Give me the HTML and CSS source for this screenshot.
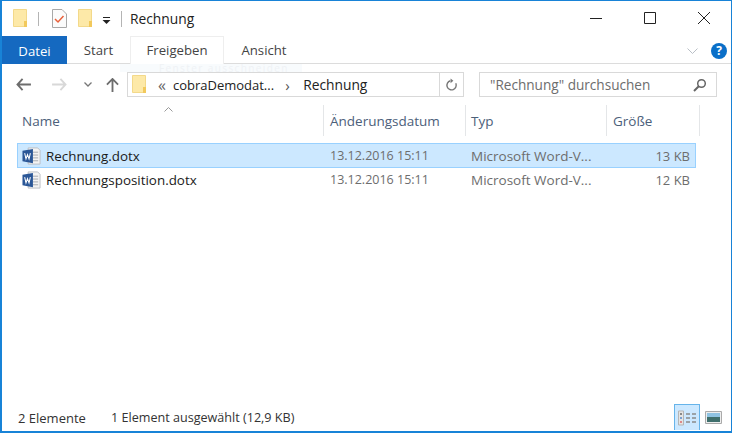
FILE: index.html
```html
<!DOCTYPE html>
<html lang="de">
<head>
<meta charset="utf-8">
<title>Rechnung</title>
<link rel="stylesheet" href="styles.css">
</head>
<body>
<svg class="defs" width="0" height="0">
  <defs>
    <symbol id="folder" viewBox="0 0 15 19">
      <path d="M.5.500h13v17H.500z" fill="#fde9a8" stroke="#f3d98a"/>
      <path d="M11 12h3v6h-3z" fill="#f2c95c"/>
    </symbol>
    <symbol id="word" viewBox="0 0 20 18">
      <path d="M6.500.500h10l2.500 2.500v14.500H6.500z" fill="#f4f4f4" stroke="#bcbfc4"/>
      <path d="M11.500 5h5.500M11.500 8h5.500M11.500 11h5.500M11.500 14h5.500" stroke="#a5a9ae"/>
      <path d="M.5 3.500 11.500 1.500v15L.5 14.500z" fill="#2b5797"/>
      <path d="M2.800 6l1.400 6 1.600-4.500L7.400 12 8.800 6" fill="none" stroke="#fff" stroke-width="1.100"/>
    </symbol>
  </defs>
</svg>
<div class="window">
  <header class="titlebar">
    <svg class="folder-icon"><use href="#folder"/></svg>
    <span class="sep sep-a"></span>
    <svg class="check-icon" viewBox="0 0 15 19" width="15" height="19">
      <path d="M.5.500h9.500l4.500 4.500v13.500H.5z" fill="#fbfbfb" stroke="#a8a8a8"/>
      <path d="M3 10l3 3 5.500-6" fill="none" stroke="#e8603a" stroke-width="1.500"/>
    </svg>
    <svg class="folder-icon folder-b"><use href="#folder"/></svg>
    <svg class="drop-icon" viewBox="0 0 9 7" width="9" height="7">
      <path d="M1 .5h7" stroke="#222"/><path d="M.5 3h8L4.500 7z" fill="#222"/>
    </svg>
    <span class="sep sep-b"></span>
    <span class="title">Rechnung</span>
    <div class="controls">
      <svg viewBox="0 0 12 12" width="12" height="12"><path d="M0 6.500h12" stroke="#222"/></svg>
      <svg viewBox="0 0 12 12" width="12" height="12"><path d="M.5.500h11v11H.500z" fill="none" stroke="#222"/></svg>
      <svg viewBox="0 0 12 12" width="12" height="12"><path d="M0 0l12 12M12 0L0 12" stroke="#222"/></svg>
    </div>
  </header>
  <nav class="tabs">
    <span class="tab tab-file">Datei</span>
    <span class="tab tab-start">Start</span>
    <span class="tab tab-active">Freigeben</span>
    <span class="tab tab-view">Ansicht</span>
    <div class="tabs-right">
      <svg viewBox="0 0 11 6" width="11" height="6"><path d="M.5.500l5 5 5-5" fill="none" stroke="#b9bfc6"/></svg>
      <span class="help">?</span>
    </div>
  </nav>
  <div class="addressbar">
    <div class="nav-buttons">
      <svg viewBox="0 0 16 14" width="15" height="13"><path d="M7 1 1.500 7 7 13M2 7h14" fill="none" stroke="#6d6d6d" stroke-width="2"/></svg>
      <svg viewBox="0 0 16 14" width="15" height="13"><path d="M9 1l5.500 6L9 13M14 7H0" fill="none" stroke="#d8d8d8" stroke-width="2"/></svg>
      <svg viewBox="0 0 8 5" width="8" height="5"><path d="M.5.500 4 4 7.500.500" fill="none" stroke="#777" stroke-width="1.300"/></svg>
      <svg viewBox="0 0 14 15" width="13" height="14"><path d="M1 7l6-6 6 6M7 2v13" fill="none" stroke="#6d6d6d" stroke-width="2"/></svg>
    </div>
    <div class="path">
      <svg class="path-folder"><use href="#folder"/></svg>
      <span class="chev">«</span>
      <span class="crumb">cobraDemodat...</span>
      <span class="crumb-arrow">›</span>
      <span class="crumb crumb-last">Rechnung</span>
      <span class="refresh">
        <svg viewBox="0 0 14 14" width="13" height="14"><path d="M3.500 3.500a5 5 0 1 0 6.500 0" fill="none" stroke="#777" stroke-width="1.500" transform="rotate(25 7 8)"/><path d="M6 0v5l3-2.500z" fill="#777"/></svg>
      </span>
    </div>
    <div class="search">
      <span>"Rechnung" durchsuchen</span>
      <svg viewBox="0 0 14 14" width="14" height="14"><circle cx="8.500" cy="5.500" r="3.800" fill="none" stroke="#666" stroke-width="1.500"/><path d="M6 8l-5 5" stroke="#666" stroke-width="2"/></svg>
    </div>
    <div class="ghost">Fenster ausschneiden</div>
  </div>
  <main class="list">
    <svg class="sort" viewBox="0 0 9 5" width="9" height="5"><path d="M.5 4.500 4.500.500l4 4" fill="none" stroke="#999"/></svg>
    <div class="row header">
      <span class="col-name">Name</span>
      <span class="col-date">Änderungsdatum</span>
      <span class="col-type">Typ</span>
      <span class="col-size">Größe</span>
    </div>
    <div class="row file selected">
      <span class="col-name"><svg class="word-icon"><use href="#word"/></svg>Rechnung.dotx</span>
      <span class="col-date">13.12.2016 15:11</span>
      <span class="col-type">Microsoft Word-V...</span>
      <span class="col-size">13 KB</span>
    </div>
    <div class="row file">
      <span class="col-name"><svg class="word-icon"><use href="#word"/></svg>Rechnungsposition.dotx</span>
      <span class="col-date">13.12.2016 15:11</span>
      <span class="col-type">Microsoft Word-V...</span>
      <span class="col-size">12 KB</span>
    </div>
  </main>
  <footer class="statusbar">
    <span class="count">2 Elemente</span>
    <span class="selection">1 Element ausgewählt (12,9 KB)</span>
    <div class="views">
      <span class="view view-active">
        <svg viewBox="0 0 20 16" width="20" height="16">
          <path d="M1.500 1h5v14h-5z" fill="#e4e4e4" stroke="#b5b5b5"/>
          <path d="M3 3h2v2H3z" fill="#888"/><path d="M3 7h2v2H3z" fill="#7aa0d0"/><path d="M3 11h2v2H3z" fill="#d88"/>
          <path d="M9 4h4M15 4h4M9 8h4M15 8h4M9 12h4M15 12h4" stroke="#8a8a8a" stroke-width="1.500"/>
        </svg>
      </span>
      <span class="view">
        <svg viewBox="0 0 17 13" width="17" height="13">
          <path d="M.5.500h16v12H.500z" fill="#eee" stroke="#aaa"/>
          <path d="M2 2h13v4H2z" fill="#8fc3e2"/><path d="M2 6h13v5H2z" fill="#3f6f6c"/>
        </svg>
      </span>
    </div>
  </footer>
</div>
</body>
</html>
```
FILE: styles.css
```css
* { box-sizing: border-box; }
html, body { margin: 0; padding: 0; }
body { width: 732px; height: 433px; overflow: hidden; background: #fff; }
.defs { position: absolute; }
.window {
  width: 732px; height: 433px;
  display: flex; flex-direction: column;
  border: 1px solid #1883d7; border-left-width: 2px; border-bottom-width: 2px;
  background: #fff;
  font: 13px/16px "Open Sans", "Noto Sans", sans-serif;
  color: #1a1a1a;
}
.titlebar { height: 35px; display: flex; align-items: center; padding-left: 11px; flex: none; }
.folder-icon { width: 15px; height: 19px; }
.sep { width: 1px; height: 14px; background: #b4b4b4; }
.sep-a { margin-left: 10px; }
.check-icon { margin-left: 13px; }
.folder-b { margin-left: 11px; }
.drop-icon { margin-left: 9px; margin-top: 4px; }
.sep-b { height: 16px; margin-left: 10px; }
.title { margin-left: 8px; font-size: 13.800px; color: #222; }
.controls { margin-left: auto; display: flex; gap: 42px; padding-right: 21px; margin-top: -2px; }
.tabs { height: 28px; display: flex; flex: none; border-bottom: 1px solid #dcdcdc; position: relative; align-items: stretch; }
.tab { padding-top: 6px; font-size: 13.200px; color: #444; text-align: center; }
.tab-file { width: 65px; background: #1569c0; color: #fff; margin-bottom: -1px; padding-top: 7px; }
.tab-start { width: 63px; }
.tab-active { width: 94px; border: 1px solid #eeeeee; border-bottom: 0; background: #fff; margin-bottom: -1px; padding-top: 5px; }
.tab-view { width: 80px; }
.tabs-right { margin-left: auto; display: flex; align-items: center; gap: 13px; padding-right: 4px; padding-top: 3px; }
.help { width: 16px; height: 16px; border-radius: 50%; background: #0a6fc8; color: #fff; font: bold 12px/16px "Open Sans", sans-serif; text-align: center; }
.addressbar { height: 39px; padding-top: 2px; display: flex; align-items: center; flex: none; position: relative; }
.nav-buttons { width: 125px; padding-left: 14px; display: flex; align-items: center; }
.nav-buttons svg:nth-child(2) { margin-left: 21px; }
.nav-buttons svg:nth-child(3) { margin-left: 17px; }
.nav-buttons svg:nth-child(4) { margin-left: 14px; }
.path { width: 337px; height: 25px; border: 1px solid #d9d9d9; display: flex; align-items: center; padding-left: 4px; background: #fff; }
.path-folder { width: 15px; height: 19px; }
.chev { margin-left: 11px; color: #666; font-size: 16px; line-height: 16px; }
.crumb { margin-left: 7px; color: #222; font-size: 13px; white-space: nowrap; }
.crumb-last { margin-left: 0; font-size: 13.800px; }
.crumb-arrow { width: 29px; padding-left: 11px; color: #555; font-size: 15px; }
.refresh { margin-left: auto; width: 24px; height: 100%; border-left: 1px solid #d9d9d9; display: flex; align-items: center; justify-content: center; }
.search { width: 238px; height: 25px; margin-left: 15px; border: 1px solid #d9d9d9; display: flex; align-items: center; justify-content: space-between; padding: 0 9px 0 10px; color: #6d6d6d; font-size: 13.600px; }
.ghost { position: absolute; left: 118px; top: 0; width: 182px; height: 8px; padding-left: 39px; background: #f8fbfd; color: #eff2f5; font-size: 10px; line-height: 9px; letter-spacing: 1.400px; white-space: nowrap; }
.list { flex: 1; position: relative; padding-top: 2px; }
.sort { position: absolute; left: 162px; top: 4px; }
.row { display: flex; align-items: center; }
.row span { display: block; flex: none; }
.header { height: 31px; color: #4c607a; margin-left: 18px; width: 680px; font-size: 13.500px; }
.header .col-name { width: 303px; padding-left: 2px; }
.header span + span { height: 31px; line-height: 33px; border-left: 1px solid #e4e6e8; }
.header .col-date { width: 142px; padding-left: 6px; }
.header .col-type { width: 141px; padding-left: 5px; }
.header .col-size { width: 94px; padding-left: 6px; border-right: 1px solid #e4e6e8; }
.file { height: 25px; margin-left: 15px; width: 679px; color: #6d6d6d; font-size: 13.500px; border: 1px solid transparent; }
.selected { margin-top: 7px; background: #cce8ff; border-color: #99d1ff; }
.selected + .file { margin-top: -1px; }
.file .col-name { color: #1a1a1a; font-size: 13.400px; display: flex; align-items: center; width: 312px; padding-left: 4px; }
.file .col-date { width: 141px; font-size: 12.500px; }
.file .col-type { width: 166px; }
.file .col-size { width: 53px; text-align: right; font-size: 13px; }
.word-icon { width: 19px; height: 18px; margin-right: 5px; }
.statusbar { height: 28px; padding-top: 2px; display: flex; align-items: center; flex: none; padding-left: 16px; color: #333; }
.count { width: 93px; font-size: 13px; }
.selection { flex: 1; font-size: 12.600px; }
.views { display: flex; align-self: stretch; align-items: center; padding-right: 5px; margin-top: -2px; }
.view { width: 26px; height: 26px; display: flex; align-items: center; justify-content: center; }
.view-active { background: #cce8ff; border: 1px solid #66b4ea; border-bottom: 0; }
```
